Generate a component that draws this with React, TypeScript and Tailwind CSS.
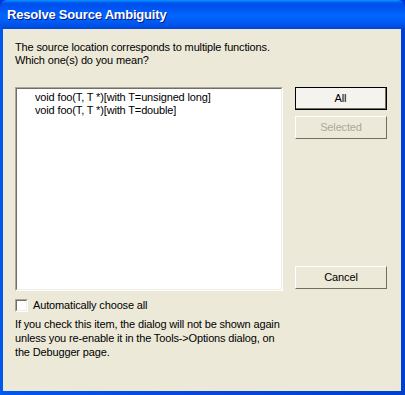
import React from "react";

const font = { fontFamily: "'Liberation Sans', sans-serif" };

export default function App() {
  return (
    <div className="w-[405px] h-[395px] bg-[#0831d9] flex flex-col overflow-hidden" style={font}>
      <div
        className="h-[29px] shrink-0 flex items-center pl-[7px] rounded-t-[7px]"
        style={{
          background:
            "linear-gradient(180deg,#0997ff 0%,#0053ee 10%,#0050ee 20%,#0066ff 55%,#0058f0 80%,#0046d6 100%)",
        }}
      >
        <span
          className="text-white font-bold text-[13px] tracking-[-0.2px] pt-[1px]"
          style={{ fontFamily: "'Liberation Sans', sans-serif", textShadow: "1px 1px #0a1883" }}
        >
          Resolve Source Ambiguity
        </span>
      </div>
      <div className="flex-1 flex pl-[3px] pr-[4px] pb-[4px] bg-gradient-to-r from-[#0058ee] via-[#0a46d8] to-[#0040d0]">
        <div className="flex-1 bg-[#ece9d8] text-[11px] text-black leading-[13px] tracking-[-0.15px] pl-[12px] pt-[12px] flex flex-col">
          <div className="h-[28px]">
            <div>The source location corresponds to multiple functions.</div>
            <div>Which one(s) do you mean?</div>
          </div>
          <div className="flex mt-[18px]">
            <div className="w-[268px] h-[204px] border border-t-[#aca899] border-l-[#aca899] border-r-white border-b-white">
              <div className="w-full h-full border border-t-[#716f64] border-l-[#716f64] border-r-[#f1efe2] border-b-[#f1efe2] bg-white pl-[18px] pt-[2px]">
                <div className="h-[13px] leading-[13px]">void foo(T, T *)[with T=unsigned long]</div>
                <div className="h-[13px] leading-[13px]">void foo(T, T *)[with T=double]</div>
              </div>
            </div>
            <div className="ml-[12px] flex flex-col w-[92px]">
              <button className="h-[23px] border border-black bg-[#f4f3ee] flex items-center justify-center">
                <span className="w-full h-full flex items-center justify-center border-r border-b border-r-[#716f64] border-b-[#716f64]">All</span>
              </button>
              <button className="mt-[6px] h-[23px] border border-t-white border-l-white border-r-[#716f64] border-b-[#716f64] bg-[#ece9d8] text-[#aca899] flex items-center justify-center">
                Selected
              </button>
              <div className="flex-1" />
              <button className="mb-[2px] h-[23px] border border-t-white border-l-white border-r-[#716f64] border-b-[#716f64] bg-[#ece9d8] flex items-center justify-center">
                Cancel
              </button>
            </div>
          </div>
          <div className="flex items-center mt-[8px] h-[13px]">
            <div className="w-[13px] h-[13px] border border-t-[#aca899] border-l-[#aca899] border-r-white border-b-white">
              <div className="w-full h-full border border-t-[#716f64] border-l-[#716f64] border-r-[#f1efe2] border-b-[#f1efe2] bg-white" />
            </div>
            <span className="ml-[5px]">Automatically choose all</span>
          </div>
          <div className="mt-[5px] leading-[14px]">
            <div>If you check this item, the dialog will not be shown again</div>
            <div>unless you re-enable it in the Tools-&gt;Options dialog, on</div>
            <div>the Debugger page.</div>
          </div>
        </div>
      </div>
    </div>
  );
}
